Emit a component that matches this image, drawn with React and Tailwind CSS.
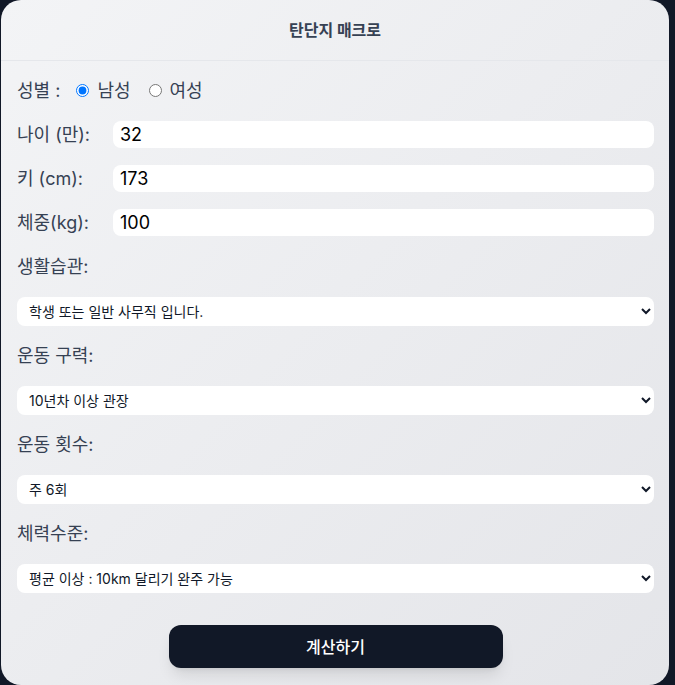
import React, { useState } from "react";

const FONT = { fontFamily: '"Inter", "Noto Sans CJK KR", sans-serif' };

const AppSelect = ({ label, value, options, onChange }) => (
  <div className="flex flex-col">
    <label className="text-lg leading-[28px] text-gray-700">{label}</label>
    <select
      value={value}
      onChange={(e) => onChange(e.target.value)}
      className="mt-4 h-[29px] w-full rounded-lg bg-white px-2 text-sm text-gray-900 outline-none"
    >
      {options.map((o) => (
        <option key={o}>{o}</option>
      ))}
    </select>
  </div>
);

const NumberRow = ({ label, value, onChange }) => (
  <div className="flex h-[27px] items-center">
    <label className="w-[96px] text-lg text-gray-700">{label}</label>
    <input
      value={value}
      onChange={(e) => onChange(e.target.value)}
      className="h-[27px] flex-1 rounded-lg bg-white px-[7px] text-lg text-black outline-none"
    />
  </div>
);

export default function App() {
  const [gender, setGender] = useState("male");
  const [age, setAge] = useState("32");
  const [height, setHeight] = useState("173");
  const [weight, setWeight] = useState("100");
  const [life, setLife] = useState("학생 또는 일반 사무직 입니다.");
  const [career, setCareer] = useState("10년차 이상 관장");
  const [freq, setFreq] = useState("주 6회");
  const [level, setLevel] = useState("평균 이상 : 10km 달리기 완주 가능");

  return (
    <div className="min-h-[685px] bg-[#111827] pl-px" style={FONT}>
      <div className="h-[685px] w-[668px] overflow-hidden rounded-[20px] bg-gradient-to-br from-[#f3f4f6] to-[#e4e5e9]">
        {/* Header */}
        <div className="flex h-[61px] items-center justify-center border-b border-gray-200">
          <h1 className="text-base font-bold text-gray-700">탄단지 매크로</h1>
        </div>

        <div className="flex flex-col pl-[16px] pr-[15px] pt-4">
          {/* Gender */}
          <div className="flex h-[27px] items-center text-lg text-gray-700">
            <span>성별 :</span>
            <label className="ml-[16px] flex items-center">
              <input
                type="radio"
                name="gender"
                checked={gender === "male"}
                onChange={() => setGender("male")}
                className="m-0 mr-[8px] h-[13px] w-[13px]"
              />
              남성
            </label>
            <label className="ml-[18px] flex items-center">
              <input
                type="radio"
                name="gender"
                checked={gender === "female"}
                onChange={() => setGender("female")}
                className="m-0 mr-[8px] h-[13px] w-[13px]"
              />
              여성
            </label>
          </div>

          <div className="mt-[17px] flex flex-col gap-[17px]">
            <NumberRow label="나이 (만):" value={age} onChange={setAge} />
            <NumberRow label="키 (cm):" value={height} onChange={setHeight} />
            <NumberRow label="체중(kg):" value={weight} onChange={setWeight} />
          </div>

          <div className="mt-[17px] flex flex-col gap-[16px]">
            <AppSelect
              label="생활습관:"
              value={life}
              onChange={setLife}
              options={["학생 또는 일반 사무직 입니다.", "활동량이 많은 직업입니다."]}
            />
            <AppSelect
              label="운동 구력:"
              value={career}
              onChange={setCareer}
              options={["1년 미만", "10년차 이상 관장"]}
            />
            <AppSelect
              label="운동 횟수:"
              value={freq}
              onChange={setFreq}
              options={["주 3회", "주 6회"]}
            />
            <AppSelect
              label="체력수준:"
              value={level}
              onChange={setLevel}
              options={["평균 이하", "평균 이상 : 10km 달리기 완주 가능"]}
            />
          </div>

          <div className="mt-8 flex justify-center">
            <button className="h-[43px] w-[334px] rounded-xl bg-[#111827] text-base font-medium text-white shadow-lg">
              계산하기
            </button>
          </div>
        </div>
      </div>
    </div>
  );
}
